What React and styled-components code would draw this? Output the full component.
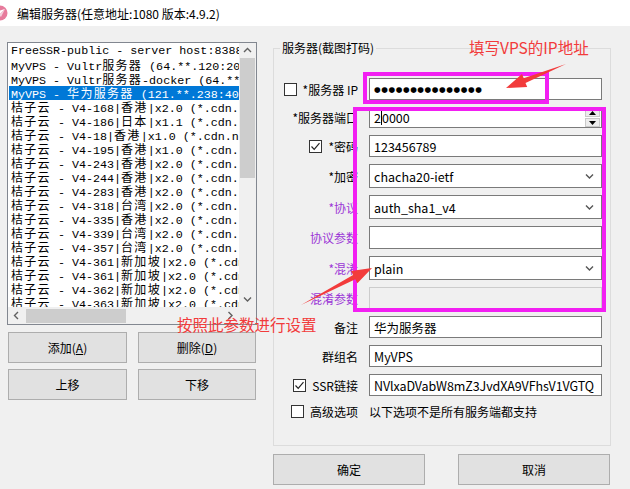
import React from "react";
import styled, { createGlobalStyle } from "styled-components";

const GlobalStyle = createGlobalStyle`
  html, body { margin: 0; padding: 0; background: #f0f0f0; }
  body {
    font-family: "Noto Sans CJK SC", "Noto Sans", sans-serif;
    font-size: 12px;
    color: #000;
  }
`;

const servers = [
  "FreeSSR-public - server host:8388:aes",
  "MyVPS - Vultr服务器 (64.**.120:20000)",
  "MyVPS - Vultr服务器-docker (64.**.120)",
  "MyVPS - 华为服务器 (121.**.238:40000)",
  "桔子云 - V4-168|香港|x2.0 (*.cdn.net)",
  "桔子云 - V4-186|日本|x1.1 (*.cdn.net)",
  "桔子云 - V4-18|香港|x1.0 (*.cdn.net)",
  "桔子云 - V4-195|香港|x1.0 (*.cdn.net)",
  "桔子云 - V4-243|香港|x2.0 (*.cdn.net)",
  "桔子云 - V4-244|香港|x2.0 (*.cdn.net)",
  "桔子云 - V4-283|香港|x2.0 (*.cdn.net)",
  "桔子云 - V4-318|台湾|x2.0 (*.cdn.net)",
  "桔子云 - V4-335|香港|x2.0 (*.cdn.net)",
  "桔子云 - V4-339|台湾|x2.0 (*.cdn.net)",
  "桔子云 - V4-357|台湾|x2.0 (*.cdn.net)",
  "桔子云 - V4-361|新加坡|x2.0 (*.cdn.net)",
  "桔子云 - V4-361|新加坡|x2.0 (*.cdn.net)",
  "桔子云 - V4-362|新加坡|x2.0 (*.cdn.net)",
  "桔子云 - V4-363|新加坡|x2.0 (*.cdn.net)",
];

// wide glyphs in the list get a bit of tracking, like the SimSun fallback
const mixed = (s) =>
  s.split(/([\u4e00-\u9fff]+)/).map((part, i) =>
    /[\u4e00-\u9fff]/.test(part) ? <Cjk key={i}>{part}</Cjk> : part
  );

const Chevron = ({ dir = "down", color = "#606060" }) => {
  const pts = {
    up: "1,5 4.5,1.5 8,5",
    down: "1,1.5 4.5,5 8,1.5",
    left: "5,1 1.5,4.5 5,8",
    right: "1.5,1 5,4.5 1.5,8",
  }[dir];
  const horiz = dir === "left" || dir === "right";
  return (
    <svg width={horiz ? 7 : 9} height={horiz ? 9 : 7} viewBox={horiz ? "0 0 7 9" : "0 0 9 7"}>
      <polyline points={pts} fill="none" stroke={color} strokeWidth="1.4" />
    </svg>
  );
};

const Check = () => (
  <svg width="11" height="11" viewBox="0 0 11 11">
    <polyline points="1.5,5.5 4.2,8.3 9.5,2.2" fill="none" stroke="#222" strokeWidth="1.2" />
  </svg>
);

export default function App() {
  return (
    <Window>
      <GlobalStyle />
      <TitleBar>
        <svg width="16" height="16" viewBox="0 0 16 16" style={{ marginLeft: -8 }}>
          <circle cx="8" cy="8" r="7.5" fill="#e77b9c" />
          <polygon points="3,7 13,4 7,10" fill="#fff" />
          <polygon points="7,10 13,4 9,12" fill="#f3d0dc" />
        </svg>
        <span>编辑服务器(任意地址:1080 版本:4.9.2)</span>
      </TitleBar>

      <Main>
        <LeftColumn>
          <ListBox>
            <ListItems>
              {servers.map((s, i) => (
                <Item key={i} $selected={i === 3}>
                  {mixed(s)}
                </Item>
              ))}
            </ListItems>
            <VScroll>
              <ArrowCell $h={15}>
                <Chevron dir="up" />
              </ArrowCell>
              <VThumb />
              <Spacer />
              <ArrowCell $h={15}>
                <Chevron dir="down" />
              </ArrowCell>
            </VScroll>
            <HScroll>
              <ArrowCell $w={17}>
                <Chevron dir="left" />
              </ArrowCell>
              <HThumb />
              <Spacer />
              <ArrowCell $w={17}>
                <Chevron dir="right" />
              </ArrowCell>
            </HScroll>
            <Corner />
          </ListBox>

          <ButtonGrid>
            <Button>
              添加(<u>A</u>)
            </Button>
            <Button>
              删除(<u>D</u>)
            </Button>
            <Button>上移</Button>
            <Button>下移</Button>
          </ButtonGrid>
        </LeftColumn>

        <RightColumn>
          <Group>
            <Legend>服务器(截图打码)</Legend>
            <Form>
              <Label>
                <Box />
                <span>*服务器 IP</span>
              </Label>
              <Field $h={22}>
                <Dots>●●●●●●●●●●●●●●●</Dots>
              </Field>

              <Label>*服务器端口</Label>
              <Field $h={21}>
                <span>2</span>
                <Caret />
                <span>0000</span>
                <Spinner>
                  <SpinButton>
                    <svg width="7" height="4" viewBox="0 0 7 4">
                      <polygon points="0,4 3.5,0 7,4" fill="#000" />
                    </svg>
                  </SpinButton>
                  <SpinButton>
                    <svg width="7" height="4" viewBox="0 0 7 4">
                      <polygon points="0,0 3.5,4 7,0" fill="#000" />
                    </svg>
                  </SpinButton>
                </Spinner>
              </Field>

              <Label>
                <Box>
                  <Check />
                </Box>
                <span>*密码</span>
              </Label>
              <Field $h={22}>123456789</Field>

              <Label>*加密</Label>
              <Field $h={24}>
                chacha20-ietf
                <ComboArrow>
                  <Chevron dir="down" color="#555" />
                </ComboArrow>
              </Field>

              <Label $purple>*协议</Label>
              <Field $h={24}>
                auth_sha1_v4
                <ComboArrow>
                  <Chevron dir="down" color="#555" />
                </ComboArrow>
              </Field>

              <Label $purple>协议参数</Label>
              <Field $h={23} />

              <Label $purple>*混淆</Label>
              <Field $h={24}>
                plain
                <ComboArrow>
                  <Chevron dir="down" color="#555" />
                </ComboArrow>
              </Field>

              <Label $purple>混淆参数</Label>
              <Field $h={22} $disabled />

              <Label>备注</Label>
              <Field $h={22}>华为服务器</Field>

              <Label>群组名</Label>
              <Field $h={22}>MyVPS</Field>

              <Label>
                <Box>
                  <Check />
                </Box>
                <span>SSR链接</span>
              </Label>
              <Field $h={22}>
                <Clip>NVlxaDVabW8mZ3JvdXA9VFhsV1VGTQ</Clip>
              </Field>

              <Label>
                <Box />
                <span>高级选项</span>
              </Label>
              <Hint>以下选项不是所有服务端都支持</Hint>
            </Form>
          </Group>

          <Footer>
            <WideButton>确定</WideButton>
            <WideButton>取消</WideButton>
          </Footer>
        </RightColumn>
      </Main>

      <Note $x={469} $y={36}>填写VPS的IP地址</Note>
      <Note $x={177} $y={313}>按照此参数进行设置</Note>
      <Frame $x={363} $y={72} $w={186} $h={32} />
      <Frame $x={353} $y={107} $w={253} $h={205} />
      <ArrowLayer width="630" height="489" viewBox="0 0 630 489">
        <polygon
          points="566,64 523.7,78.3 522,74.1 506,88 527.2,87.1 525.5,82.9"
          fill="#f23b3b"
        />
        <polygon
          points="301,305 353.1,274.9 351,270.9 372,268 357.4,283.3 355.3,279.3"
          fill="#f23b3b"
        />
      </ArrowLayer>
    </Window>
  );
}

const Window = styled.div`
  position: relative;
  width: 630px;
  height: 489px;
  overflow: hidden;
  background: #f0f0f0;
`;

const TitleBar = styled.div`
  height: 26px;
  background: #fff;
  display: flex;
  align-items: center;
  gap: 9px;
  font-size: 12px;
  white-space: nowrap;
`;

const Main = styled.div`
  display: grid;
  grid-template-columns: 250px 338px;
  column-gap: 16px;
  padding: 16px 0 0 7px;
`;

const LeftColumn = styled.div`
  display: flex;
  flex-direction: column;
  gap: 7px;
`;

const ListBox = styled.div`
  box-sizing: border-box;
  height: 283px;
  border: 1px solid #828790;
  background: #fff;
  display: grid;
  grid-template-columns: 231px 17px;
  grid-template-rows: 264px 17px;
`;

const ListItems = styled.ul`
  margin: 0;
  padding: 1px 0 0 1px;
  list-style: none;
  overflow: hidden;
`;

const Item = styled.li`
  height: 14px;
  line-height: 14px;
  padding-left: 2px;
  white-space: nowrap;
  overflow: hidden;
  font-family: "Liberation Mono", "Noto Sans CJK SC", monospace;
  font-size: 11.7px;
  background: ${(p) => (p.$selected ? "#0078d7" : "transparent")};
  color: ${(p) => (p.$selected ? "#fff" : "#000")};
`;

const Cjk = styled.span`
  font-family: "Noto Sans CJK SC", sans-serif;
  font-size: 12px;
  line-height: 14px;
  letter-spacing: 1.3px;
`;

const VScroll = styled.div`
  background: #f0f0f0;
  display: flex;
  flex-direction: column;
`;

const HScroll = styled.div`
  background: #f0f0f0;
  display: flex;
  align-items: stretch;
`;

const Corner = styled.div`
  background: #f0f0f0;
`;

const ArrowCell = styled.div`
  display: flex;
  align-items: center;
  justify-content: center;
  flex: none;
  ${(p) => (p.$h ? `height: ${p.$h}px;` : "")}
  ${(p) => (p.$w ? `width: ${p.$w}px;` : "")}
`;

const VThumb = styled.div`
  height: 120px;
  margin: 0 1px;
  background: #cdcdcd;
`;

const HThumb = styled.div`
  width: 100px;
  margin: 2px 0 1px 1px;
  background: #cdcdcd;
`;

const Spacer = styled.div`
  flex: 1;
`;

const ButtonGrid = styled.div`
  display: grid;
  grid-template-columns: 119px 118px;
  column-gap: 11px;
  row-gap: 6px;
  padding-left: 1px;
`;

const Button = styled.div`
  box-sizing: border-box;
  height: 31px;
  border: 1px solid #adadad;
  background: #e1e1e1;
  display: flex;
  align-items: center;
  justify-content: center;
  font-size: 12px;
  u {
    text-decoration: underline;
  }
`;

const RightColumn = styled.div`
  margin-top: -2px;
  display: flex;
  flex-direction: column;
  gap: 8px;
`;

const Group = styled.fieldset`
  margin: 0;
  padding: 22px 8px 25px 0;
  border: 1px solid #dcdcdc;
  min-width: 0;
`;

const Legend = styled.legend`
  margin-left: 6px;
  padding: 0 2px;
  line-height: 16px;
  font-size: 12px;
`;

const Form = styled.div`
  display: grid;
  grid-template-columns: 84px 233px;
  column-gap: 11px;
  row-gap: 7px;
  align-items: center;
`;

const Label = styled.div`
  display: flex;
  align-items: center;
  justify-content: flex-end;
  gap: 6px;
  white-space: nowrap;
  font-size: 12px;
  color: ${(p) => (p.$purple ? "#9b36d6" : "#000")};
`;

const Box = styled.span`
  box-sizing: border-box;
  width: 13px;
  height: 13px;
  border: 1px solid #333;
  background: #fff;
  display: inline-flex;
  align-items: center;
  justify-content: center;
  flex: none;
`;

const Field = styled.div`
  box-sizing: border-box;
  position: relative;
  height: ${(p) => p.$h}px;
  border: 1px solid ${(p) => (p.$disabled ? "#cccccc" : "#7a7a7a")};
  background: ${(p) => (p.$disabled ? "#f0f0f0" : "#fff")};
  display: flex;
  align-items: center;
  padding: 0 4px;
  font-size: 12.5px;
  white-space: nowrap;
  overflow: hidden;
`;

const Dots = styled.span`
  font-family: "DejaVu Sans", sans-serif;
  font-size: 7.6px;
  letter-spacing: 0.6px;
`;

const Caret = styled.span`
  width: 1px;
  height: 14px;
  background: #000;
`;

const Spinner = styled.div`
  margin-left: auto;
  margin-right: -3px;
  display: flex;
  flex-direction: column;
  gap: 1px;
`;

const SpinButton = styled.div`
  box-sizing: border-box;
  width: 15px;
  height: 9px;
  border: 1px solid #c9c9c9;
  background: #ececec;
  display: flex;
  align-items: center;
  justify-content: center;
`;

const ComboArrow = styled.span`
  margin-left: auto;
  margin-right: 3px;
  display: flex;
`;

const Clip = styled.span`
  overflow: hidden;
  letter-spacing: -0.1px;
`;

const Hint = styled.div`
  font-size: 12px;
  white-space: nowrap;
`;

const Footer = styled.div`
  display: flex;
  justify-content: space-between;
  width: 337px;
`;

const WideButton = styled(Button)`
  width: 152px;
`;

const Note = styled.div`
  position: absolute;
  left: ${(p) => p.$x}px;
  top: ${(p) => p.$y}px;
  color: #f23b3b;
  font-size: 15.5px;
  white-space: nowrap;
  pointer-events: none;
`;

const Frame = styled.div`
  position: absolute;
  box-sizing: border-box;
  left: ${(p) => p.$x}px;
  top: ${(p) => p.$y}px;
  width: ${(p) => p.$w}px;
  height: ${(p) => p.$h}px;
  border: 4px solid #f21ff2;
  pointer-events: none;
`;

const ArrowLayer = styled.svg`
  position: absolute;
  left: 0;
  top: 0;
  pointer-events: none;
`;
